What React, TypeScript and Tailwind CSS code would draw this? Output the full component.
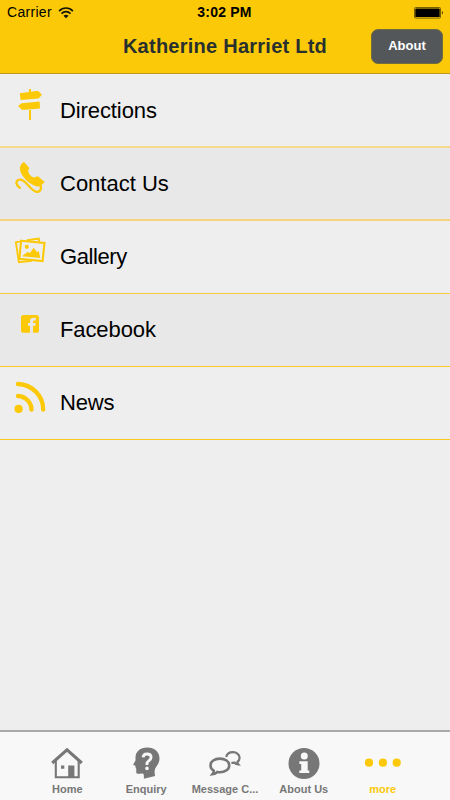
import type { ReactNode } from 'react';
import clsx from 'clsx';

const DirectionsIcon = () => (
  <svg width="32" height="34" viewBox="0 0 32 34" fill="currentColor">
    <path d="M15 1h2v3h-2zM15 22h2v10h-2z" />
    <path d="M5.8 5.2 24 2.8l4 3.9-3.4 3.9L6.6 11.9zM7.6 15.3l18-1.8.5 6.9-18 1.5L4 18z" />
  </svg>
);

const PhoneIcon = () => (
  <svg width="32" height="34" viewBox="0 0 32 34">
    <path
      d="M10 .9 15 6.4c.8 1-.8 2.2-.9 3.5.3 2.8 3 5.9 6.1 6.6 1.7 0 2.7-1.7 4-1.1l6.5 5.5-4.5 4c-1.1.9-3.1.9-4.7.2C15 22.9 8.2 16.3 6.1 9.6 5.5 5.7 6.8 2.3 10 .9z"
      fill="currentColor"
    />
    <path
      d="M6.7 27.2C4 26 1.3 22.6 2.8 20.2c1.7-2.6 5.1-2 8.2.8l6 6.3c3.2 3.2 6.7 4.7 8.9 2.3 1.5-1.5 1.3-3.4.6-5.4"
      fill="none"
      stroke="currentColor"
      strokeWidth="2.3"
    />
  </svg>
);

const GalleryIcon = () => (
  <svg width="32" height="34" viewBox="0 0 32 34" fill="none" stroke="currentColor">
    <path d="M5.9 7.6 1.9 8.2 4.9 28.2 18 26.8M13 6.2l11.8-1.6.4 3" strokeWidth="1.9" />
    <path d="m7.1 6.7 23.4 2.2-1.9 18.1-23.2-2.2z" strokeWidth="2.1" />
    <circle cx="12.8" cy="12.8" r="2.1" fill="currentColor" stroke="none" />
    <path d="m8 22.3 5.5-4.3 2.4 1 3.7-5.2 3.6 4.4 1.6-1.3 1.5 7z" fill="currentColor" stroke="none" />
  </svg>
);

const FacebookIcon = () => (
  <svg width="32" height="34" viewBox="0 0 32 34" fill="currentColor">
    <path d="M9.6 7.9h12.8A2.6 2.6 0 0 1 25 10.5v12.7a2.6 2.6 0 0 1-2.6 2.6H19v-7h2.4l.3-2.8H19v-1.2c0-.9.5-1.3 1.4-1.3h1.4v-2.7h-2.2c-2.3 0-3.6 1.2-3.6 3.3V16h-2v2.8h2v7H9.6A2.6 2.6 0 0 1 7 23.2V10.5a2.6 2.6 0 0 1 2.6-2.6z" />
  </svg>
);

const NewsIcon = () => (
  <svg width="32" height="34" viewBox="0 0 32 34" fill="none" stroke="currentColor" strokeWidth="4.3" strokeLinecap="round">
    <circle cx="4.6" cy="28.9" r="4.1" fill="currentColor" stroke="none" />
    <path d="M4 16c7.5.2 13.5 6.8 13.5 13.7M4 4c14.2.4 25.2 12 25.2 25.7" />
  </svg>
);

const HomeIcon = () => (
  <svg width="32" height="32" viewBox="0 0 32 32" fill="none" stroke="currentColor">
    <path d="M1.2 16 16 2.9 30.8 16" strokeWidth="3.1" />
    <path d="M4.8 13.5v16.7h22.9V13.5" strokeWidth="2.1" />
    <path d="M17.2 18.4h6.2v12h-6.2zM10 18.4h3.3v3.3H10z" fill="currentColor" stroke="none" />
  </svg>
);

const EnquiryIcon = () => (
  <svg className="ml-px" width="32" height="32" viewBox="0 0 32 32" fill="none">
    <path
      d="M16.2.5C9.2.5 4.7 4.4 4.5 10.5c-.1 1.1.2 2 0 3L2.3 17.4c-.3.5 0 .8.6.9l1.4.3.2 1.9 1 .6-.8.9.7.7-.2 2c0 1.7 1 2.2 2.6 2.1l3.9-.4c1 .2 1.3 1.5 1.2 5.3l11.2-2.8c-1.1-4.6-.4-7.4 2.1-10.7 1.5-2 2.3-4.2 2.3-6.6C28.5 5 23.7.5 16.2.5z"
      fill="currentColor"
    />
    <path d="M12.1 10.4c.1-2.3 1.6-3.4 3.9-3.4 2.5 0 4.1 1.3 4.1 3.3 0 3.4-4.1 3.1-4.1 6.4v1.3" stroke="#f8f8f8" strokeWidth="2.8" />
    <circle cx="16" cy="21.4" r="1.8" fill="#f8f8f8" />
  </svg>
);

const MessageIcon = () => (
  <svg width="34" height="32" viewBox="0 0 34 32" fill="none" stroke="currentColor">
    <path
      d="M11.8 11.6c5.4 0 9.4 2.9 9.4 6.8s-4 6.9-9.4 6.9c-1 0-1.8-.1-2.6-.3-1 1.3-2.4 2.1-4.7 2.2 1.1-1.3 1.5-2.4 1.2-3.6-2-1.2-3.2-3.1-3.2-5.2 0-3.9 4-6.8 9.3-6.8z"
      strokeWidth="2.6"
    />
    <path
      d="M18.2 10c.6-2.8 3.3-4.8 6.7-4.8 3.8 0 6.7 2.4 6.7 5.5 0 1.7-.8 3.1-2.2 4.1 0 1 .3 1.8 1 2.6-1.9-.1-3.1-.8-3.8-1.7-1 .2-2.1.2-3.2 0"
      strokeWidth="2.2"
    />
  </svg>
);

const InfoIcon = () => (
  <svg width="32" height="32" viewBox="0 0 32 32">
    <circle cx="16" cy="16.5" r="15.5" fill="currentColor" />
    <circle cx="16.3" cy="8.9" r="3.5" fill="#f8f8f8" />
    <path d="M11.4 14.3h8.3v9.1h1.6v2.7h-10v-2.7h1.9V17h-1.8z" fill="#f8f8f8" />
  </svg>
);

const MoreIcon = () => (
  <svg width="38" height="32" viewBox="0 0 38 32" fill="currentColor">
    <circle cx="5" cy="15.7" r="4.1" />
    <circle cx="18.9" cy="15.7" r="4.1" />
    <circle cx="32.7" cy="15.7" r="4.1" />
  </svg>
);

const WifiIcon = () => (
  <svg width="16" height="12" viewBox="0 0 16 12" fill="none" stroke="#15140a" strokeWidth="1.6">
    <path d="M1.1 4.1C4.9 0 11.1 0 14.9 4.1M3.5 6.6c2.5-2.6 6.5-2.6 9 0" />
    <path d="M5.5 8.7c1.4-1.3 3.6-1.3 5 0L8 11.2z" fill="#15140a" stroke="none" />
  </svg>
);

const BatteryIcon = () => (
  <svg width="30" height="12" viewBox="0 0 30 12">
    <rect x=".5" y=".5" width="26" height="10.6" rx="1" fill="none" stroke="#786000" />
    <rect x="1.3" y="1.5" width="24.4" height="8.6" rx=".4" fill="#000" />
    <path d="M27.9 4c1.3.8 1.3 2.8 0 3.6z" fill="#332900" />
  </svg>
);

interface MenuItem {
  label: string;
  icon: ReactNode;
  row: string;
  text?: string;
}

const menuItems: MenuItem[] = [
  { label: 'Directions', icon: <DirectionsIcon />, row: 'h-[74px] pt-px bg-[#eeeeee] border-b-2 border-[#f6d98a]', text: 'tracking-[-0.1px]' },
  { label: 'Contact Us', icon: <PhoneIcon />, row: 'h-[73px] bg-[#e8e8e8] border-b-2 border-[#f5d57c]' },
  { label: 'Gallery', icon: <GalleryIcon />, row: 'h-[73px] bg-[#eeeeee] border-b border-[#f8cb3a]', text: 'tracking-[-0.4px]' },
  { label: 'Facebook', icon: <FacebookIcon />, row: 'h-[73px] bg-[#e8e8e8] border-b border-[#fbc920]', text: 'tracking-[-0.1px]' },
  { label: 'News', icon: <NewsIcon />, row: 'h-[73px] bg-[#eeeeee] border-b border-[#f8c91c]', text: 'tracking-[-0.2px]' },
];

const tabs = [
  { label: 'Home', icon: <HomeIcon /> },
  { label: 'Enquiry', icon: <EnquiryIcon /> },
  { label: 'Message C...', icon: <MessageIcon /> },
  { label: 'About Us', icon: <InfoIcon /> },
  { label: 'more', icon: <MoreIcon />, active: true },
];

export default function App() {
  return (
    <div className="flex h-[800px] w-[450px] flex-col overflow-hidden bg-[#eeeeee] font-['Liberation_Sans',Arial,sans-serif] text-black">
      <header className="h-[74px] shrink-0 border-b border-[#bd9a1f] bg-[#fbc908]">
        <div className="grid h-[25px] grid-cols-3 items-center pl-[6px] pr-[7px] text-[14px]">
          <div className="flex items-center gap-[6px] pl-px">
            <span className="tracking-[0.3px]">Carrier</span>
            <WifiIcon />
          </div>
          <span className="text-center font-bold tracking-[0.2px]">3:02 PM</span>
          <div className="-mr-px flex justify-end">
            <BatteryIcon />
          </div>
        </div>
        <div className="grid h-[42px] grid-cols-[1fr_auto_1fr] items-center px-[7px]">
          <span />
          <h1 className="text-[20px] font-bold tracking-[0.25px] text-[#28302f]">Katherine Harriet Ltd</h1>
          <button className="h-[35px] w-[72px] justify-self-end rounded-[7px] border border-[#716b40] bg-[#54575a] text-[13px] font-bold text-white">
            About
          </button>
        </div>
      </header>

      <main className="flex-1">
        <ul>
          {menuItems.map((item) => (
            <li key={item.label} className={clsx('flex pl-[14px]', item.row)}>
              <span className="w-[46px] pt-[13px] text-[#fbc908]">{item.icon}</span>
              <span className={clsx('pt-[20px] text-[22px] leading-[32px]', item.text)}>{item.label}</span>
            </li>
          ))}
        </ul>
      </main>

      <nav className="flex h-[70px] shrink-0 border-t-2 border-[#a9a9a9] bg-[#f8f8f8] px-[28px] pt-[15px]">
        {tabs.map((tab) => (
          <button
            key={tab.label}
            className={clsx(
              'flex flex-1 basis-0 flex-col items-center whitespace-nowrap text-[11px] font-bold leading-[20px]',
              tab.active ? 'text-[#fbc908]' : 'text-[#777777]'
            )}
          >
            {tab.icon}
            {tab.label}
          </button>
        ))}
      </nav>
    </div>
  );
}
